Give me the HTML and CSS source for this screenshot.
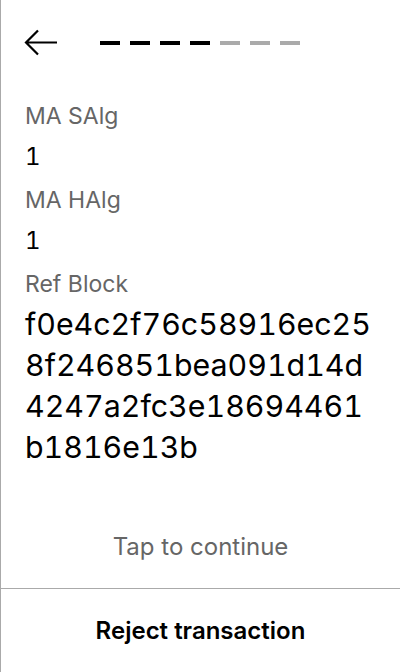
FILE: index.html
```html
<!DOCTYPE html>
<html>
<head>
<meta charset="utf-8">
<link rel="stylesheet" href="styles.css">
</head>
<body>
<div class="screen">
  <div class="header">
    <svg class="back" width="34" height="28" viewBox="0 0 34 28">
      <path d="M33 13.5 H2.5 M14 1.5 L2 13.5 L14 25.5" fill="none" stroke="#000" stroke-width="2.2"/>
    </svg>
    <div class="progress">
      <span class="dash on"></span><span class="dash on"></span><span class="dash on"></span><span class="dash on"></span><span class="dash"></span><span class="dash"></span><span class="dash"></span>
    </div>
  </div>
  <div class="content">
    <div class="field">
      <div class="label">MA SAlg</div>
      <div class="value">1</div>
    </div>
    <div class="field">
      <div class="label">MA HAlg</div>
      <div class="value">1</div>
    </div>
    <div class="field">
      <div class="label">Ref Block</div>
      <div class="value hex">f0e4c2f76c58916ec258f246851bea091d14d4247a2fc3e18694461b1816e13b</div>
    </div>
  </div>
  <div class="tap">Tap to continue</div>
  <div class="reject">Reject transaction</div>
</div>
</body>
</html>
```
FILE: styles.css
```css
html, body {
  margin: 0;
  padding: 0;
  background: #fff;
}
body {
  font-family: Inter, "Noto Sans", sans-serif;
  color: #000;
}
.screen {
  box-sizing: border-box;
  width: 400px;
  height: 672px;
  border-left: 1px solid #aaa;
  display: flex;
  flex-direction: column;
}
.header {
  height: 86px;
  display: flex;
  align-items: center;
  padding-left: 23px;
}
.back {
  display: block;
}
.progress {
  display: flex;
  gap: 10px;
  margin-left: 42px;
  margin-top: -1px;
}
.dash {
  width: 20px;
  height: 4px;
  background: #aaa;
}
.dash.on {
  background: #000;
}
.content {
  flex: 1;
  padding: 16px 24px 0 24px;
}
.field {
  margin-bottom: 13px;
}
.label {
  font-size: 23px;
  line-height: 28px;
  color: #666;
  margin-bottom: 11px;
}
.value {
  font-size: 24px;
  line-height: 32px;
  font-variant-numeric: tabular-nums;
}
.value.hex {
  font-size: 30.35px;
  line-height: 41px;
  word-break: break-all;
  margin-top: -5px;
}
.tap {
  text-align: center;
  font-size: 24px;
  line-height: 28px;
  color: #666;
  padding-top: 1px;
  padding-bottom: 27px;
  border-bottom: 1px solid #aaa;
}
.reject {
  height: 83px;
  display: flex;
  align-items: center;
  justify-content: center;
  font-size: 24px;
  font-weight: 600;
}
```
